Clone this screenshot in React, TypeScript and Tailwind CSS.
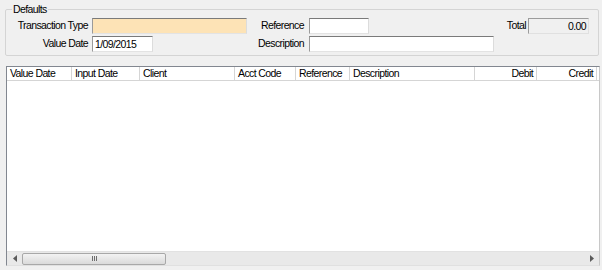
const columns = [
  { title: "Value Date", width: 65, align: "left" },
  { title: "Input Date", width: 68, align: "left" },
  { title: "Client", width: 95, align: "left" },
  { title: "Acct Code", width: 61, align: "left" },
  { title: "Reference", width: 54, align: "left" },
  { title: "Description", width: 125, align: "left" },
  { title: "Debit", width: 62, align: "right" },
  { title: "Credit", width: 60, align: "right" },
];

function TextBox({ width, value, className = "" }: { width: number; value?: string; className?: string }) {
  return (
    <div
      className={`h-[16px] border border-t-[#7a7a7a] border-l-[#9a9a9a] border-r-[#dcdcdc] border-b-[#e3e3e3] px-[2px] leading-[14px] ${className}`}
      style={{ width }}
    >
      {value}
    </div>
  );
}

export default function App() {
  return (
    <div className="w-[602px] h-[270px] bg-[#f0f0f0] text-[10.5px] text-black overflow-hidden font-['Liberation_Sans',Arial,sans-serif] tracking-[-0.6px]">
      <div className="pt-[3px] px-[5px]">
        <fieldset className="border border-[#d4d4d4] w-[594px] h-[53px] rounded-[2px]">
          <legend className="ml-[6px] px-[1px] leading-[12px]">Defaults</legend>
          <div className="flex flex-col gap-[2px] mt-[3px]">
            <div className="flex items-center h-[16px]">
              <div className="w-[83px] text-right pr-[1px]">Transaction Type</div>
              <div className="w-[3px]" />
              <TextBox width={155} className="bg-[#fde3b6]" />
              <div className="w-[59px] text-right pr-[2px]">Reference</div>
              <div className="w-[3px]" />
              <TextBox width={60} className="bg-white" />
              <div className="w-[159px] text-right pr-[2px]">Total</div>
              <TextBox width={61} value="0.00" className="text-right bg-[#f0f0f0] !border-[#9c9c9c] !border-r-[#e0e0e0] !border-b-[#e0e0e0]" />
            </div>
            <div className="flex items-center h-[16px]">
              <div className="w-[83px] text-right pr-[1px]">Value Date</div>
              <div className="w-[3px]" />
              <TextBox width={61} value="1/09/2015" className="bg-white" />
              <div className="w-[153px] text-right pr-[2px]">Description</div>
              <div className="w-[3px]" />
              <TextBox width={185} className="bg-white" />
            </div>
          </div>
        </fieldset>
      </div>

      <div className="mt-[10px] ml-[6px] w-[594px] h-[200px] border border-t-[#828790] border-l-[#828790] border-r-[#c8c8c8] border-b-[#e0e0e0] bg-white flex flex-col">
        <div className="flex h-[14px] border-b border-[#d5d5d5] bg-white leading-[13px]">
          {columns.map((c) => (
            <div
              key={c.title}
              className={`shrink-0 border-r border-[#d5d5d5] px-[3px] ${c.align === "right" ? "text-right" : "text-left"}`}
              style={{ width: c.width }}
            >
              {c.title}
            </div>
          ))}
        </div>
        <div className="flex-1" />
        <div className="h-[14px] bg-[#e9e9e9] border-t border-[#e2e2e2] flex items-center">
          <div className="w-[15px] flex items-center justify-center text-[#606060]">
            <svg width="4" height="7" viewBox="0 0 4 7">
              <path d="M4 0 L0 3.5 L4 7 Z" fill="#5a5a5a" />
            </svg>
          </div>
          <div className="w-[144px] h-[12px] rounded-[2px] border border-[#a8a8a8] bg-gradient-to-b from-[#f3f3f3] to-[#dadada] flex items-center justify-center">
            <div className="flex gap-[1px]">
              <div className="w-[1px] h-[5px] bg-[#6e6e6e]" />
              <div className="w-[1px] h-[5px] bg-[#6e6e6e]" />
              <div className="w-[1px] h-[5px] bg-[#6e6e6e]" />
            </div>
          </div>
          <div className="flex-1" />
          <div className="w-[15px] flex items-center justify-center">
            <svg width="4" height="7" viewBox="0 0 4 7">
              <path d="M0 0 L4 3.5 L0 7 Z" fill="#5a5a5a" />
            </svg>
          </div>
        </div>
      </div>
    </div>
  );
}
